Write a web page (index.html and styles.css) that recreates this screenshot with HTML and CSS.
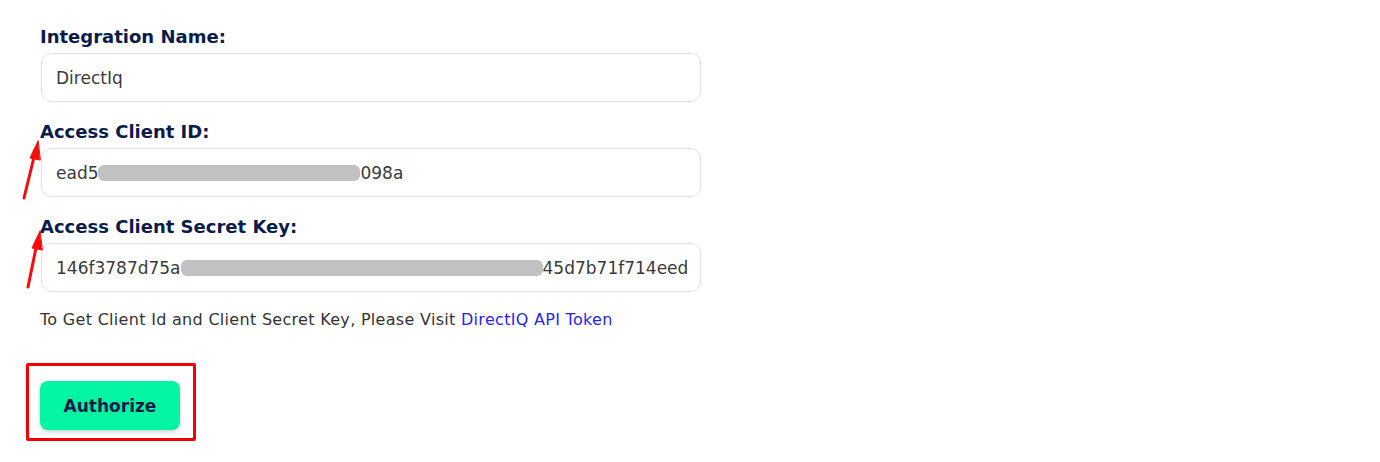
FILE: index.html
```html
<!DOCTYPE html>
<html>
<head>
<meta charset="utf-8">
<link rel="stylesheet" href="styles.css">
</head>
<body>
<div class="page">
  <form class="form">
    <div class="field">
      <label class="label">Integration Name:</label>
      <div class="input"><div class="value">DirectIq</div></div>
    </div>
    <div class="field">
      <label class="label">Access Client ID:</label>
      <div class="input"><div class="value"><span>ead5</span><span class="blur b1"></span><span>098a</span></div></div>
    </div>
    <div class="field">
      <label class="label">Access Client Secret Key:</label>
      <div class="input"><div class="value"><span>146f3787d75a</span><span class="blur b2"></span><span>45d7b71f714eeda</span></div></div>
    </div>
    <p class="help">To Get Client Id and Client Secret Key, Please Visit <a class="link" href="#">DirectIQ API Token</a></p>
    <div class="actions">
      <button type="button" class="btn">Authorize</button>
    </div>
  </form>
  <div class="highlight"></div>
  <svg class="arrows" width="60" height="300" viewBox="0 0 60 300">
    <g stroke="#f50d0d" stroke-width="3" stroke-linecap="round" fill="#f50d0d">
      <line x1="24" y1="198" x2="35" y2="153"/>
      <polygon points="38,141 30,158 40,160" stroke-width="1"/>
      <line x1="28" y1="287" x2="37" y2="243"/>
      <polygon points="40,231 32,248 42,250" stroke-width="1"/>
    </g>
  </svg>
</div>
</body>
</html>
```
FILE: styles.css
```css
html, body {
  margin: 0;
  padding: 0;
  background: #ffffff;
}
body {
  font-family: "DejaVu Sans", "Liberation Sans", sans-serif;
  width: 1380px;
  height: 462px;
  overflow: hidden;
}
.page {
  position: relative;
  padding: 25px 0 0 41px;
}
.form {
  width: 660px;
  display: flex;
  flex-direction: column;
  margin: 0;
}
.field {
  display: flex;
  flex-direction: column;
  gap: 4px;
  margin-bottom: 18px;
}
.field:nth-child(3) { margin-bottom: 0; }
.label {
  display: block;
  height: 24px;
  line-height: 24px;
  font-size: 18px;
  font-weight: 600;
  color: #0b1b4b;
  margin-left: -1px;
}
.input {
  box-sizing: border-box;
  height: 49px;
  border: 1px solid #e2e2e2;
  border-radius: 10px;
  padding: 0 13px 0 14px;
  display: flex;
  align-items: center;
}
.value {
  flex: 1;
  min-width: 0;
  display: flex;
  align-items: center;
  font-size: 17px;
  color: #3a3a3a;
  white-space: nowrap;
  overflow: hidden;
}
.blur {
  display: inline-block;
  height: 16px;
  background: #c1c1c1;
  border-radius: 6px;
  flex: none;
}
.b1 { width: 262px; }
.b2 { width: 362px; }
.help {
  margin: 18px 0 0 -1px;
  height: 20px;
  line-height: 20px;
  font-size: 16px;
  letter-spacing: 0.3px;
  color: #333333;
}
.link {
  color: #2b1fe8;
  text-decoration: none;
}
.actions {
  margin-top: 51px;
  display: flex;
}
.btn {
  width: 140px;
  height: 49px;
  margin-left: -1px;
  border: none;
  border-radius: 8px;
  background: #03f5a3;
  color: #0b1b4b;
  font-family: inherit;
  font-size: 17px;
  font-weight: 700;
  box-shadow: 0 2px 4px rgba(0, 0, 0, 0.18);
  cursor: pointer;
}
.highlight {
  position: absolute;
  left: 26px;
  top: 363px;
  width: 164px;
  height: 72px;
  border: 3px solid #f00000;
  border-radius: 2px;
}
.arrows {
  position: absolute;
  left: 0;
  top: 0;
}
```
